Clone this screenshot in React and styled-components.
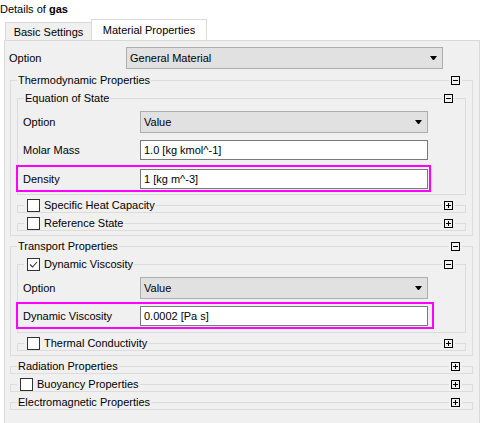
import React from "react";
import styled, { createGlobalStyle } from "styled-components";

const GlobalStyle = createGlobalStyle`
  html, body {
    margin: 0;
    padding: 0;
    background: #fff;
  }
  body {
    font-family: "Liberation Sans", Arial, sans-serif;
    font-size: 11px;
    color: #000;
  }
`;

const Page = styled.div`
  width: 485px;
  height: 423px;
  overflow: hidden;
  display: flex;
  flex-direction: column;
`;

const Heading = styled.div`
  flex: none;
  height: 19px;
  line-height: 18px;
  white-space: nowrap;
  b {
    font-weight: bold;
  }
`;

const TabBar = styled.div`
  flex: none;
  display: flex;
  align-items: flex-end;
  height: 21px;
  padding-left: 5px;
  position: relative;
  z-index: 1;
`;

const Tab = styled.div`
  box-sizing: border-box;
  width: ${({ $w }) => $w}px;
  height: ${({ $active }) => ($active ? 21 : 18)}px;
  margin-left: ${({ $active }) => ($active ? -1 : 0)}px;
  border: 1px solid #d9d9d9;
  border-bottom: none;
  background: ${({ $active }) => ($active ? "#fff" : "#f0f0f0")};
  display: flex;
  align-items: center;
  justify-content: center;
  white-space: nowrap;
`;

const Panel = styled.div`
  box-sizing: border-box;
  width: 476px;
  height: 400px;
  flex: none;
  margin-left: 4px;
  border: 1px solid #d9d9d9;
  background: #f0f0f0;
  padding: 6px 6px 0 5px;
  display: flex;
  flex-direction: column;
  gap: 11px;
`;

const Stack = styled.div`
  display: flex;
  flex-direction: column;
  gap: ${({ $gap }) => ($gap === undefined ? 10 : $gap)}px;
`;

const Group = styled.div`
  position: relative;
  border: 1px solid #dcdcdc;
  padding: ${({ $collapsed, $pad }) =>
    $collapsed ? "6px 0 0" : $pad || "17px 6px 4px 6px"};
`;

const Title = styled.div`
  position: absolute;
  top: -8px;
  left: 6px;
  height: 14px;
  line-height: 14px;
  padding: 0 1px;
  background: #f0f0f0;
  display: flex;
  align-items: center;
  white-space: nowrap;
`;

const ToggleWrap = styled.div`
  position: absolute;
  top: -5px;
  right: 10px;
  padding: 0 2px;
  height: 9px;
  background: #f0f0f0;
  display: flex;
`;

const Row = styled.div`
  display: flex;
  align-items: center;
  height: ${({ $h }) => $h || 28}px;
  margin-left: ${({ $ml }) => $ml || 0}px;
`;

const HighlightRow = styled.div`
  box-sizing: border-box;
  display: flex;
  align-items: center;
  align-self: flex-start;
  height: 27px;
  margin-top: ${({ $mt }) => $mt || 0}px;
  margin-left: -7px;
  border: 2px solid #ff00ff;
  padding: 0 ${({ $pr }) => $pr}px 0 5px;
`;

const Label = styled.div`
  width: 117px;
  flex: none;
  white-space: nowrap;
`;

const Select = styled.div`
  box-sizing: border-box;
  width: ${({ $w }) => $w}px;
  height: 22px;
  border: 1px solid #adadad;
  background: #e1e1e1;
  display: flex;
  align-items: center;
  justify-content: space-between;
  padding: 0 5px 0 3px;
`;

const Input = styled.div`
  box-sizing: border-box;
  width: 288px;
  height: 20px;
  border: 1px solid #7a7a7a;
  background: #fff;
  display: flex;
  align-items: center;
  padding-left: 3px;
  white-space: nowrap;
`;

const Box = styled.span`
  box-sizing: border-box;
  width: 13px;
  height: 13px;
  flex: none;
  margin: 0 4px 0 2px;
  border: 1px solid #333;
  background: #fff;
  display: flex;
  align-items: center;
  justify-content: center;
`;

const Arrow = () => (
  <svg width="7" height="4" viewBox="0 0 7 4">
    <polygon points="0,0 7,0 4,4 3,4" fill="#000" />
  </svg>
);

const Toggle = ({ open }) => (
  <ToggleWrap>
    <svg width="9" height="9" viewBox="0 0 9 9">
      <rect x="0.5" y="0.5" width="8" height="8" fill="none" stroke="#000" />
      <path d="M2 4.5h5" stroke="#000" />
      {!open && <path d="M4.5 2v5" stroke="#000" />}
    </svg>
  </ToggleWrap>
);

const Check = ({ checked }) => (
  <Box>
    {checked && (
      <svg width="11" height="11" viewBox="0 0 11 11">
        <path d="M2 5.5l2.5 2.5 4.5-5" fill="none" stroke="#333" strokeWidth="1.1" />
      </svg>
    )}
  </Box>
);

const GroupTitle = ({ checkbox, checked, children }) => (
  <Title>
    {checkbox && <Check checked={checked} />}
    {children}
  </Title>
);

const Collapsed = ({ title, checkbox }) => (
  <Group $collapsed>
    <GroupTitle checkbox={checkbox}>{title}</GroupTitle>
    <Toggle />
  </Group>
);

const ValueSelect = ({ width, children }) => (
  <Select $w={width}>
    <span>{children}</span>
    <Arrow />
  </Select>
);

export default function App() {
  return (
    <>
      <GlobalStyle />
      <Page>
        <Heading>
          Details of <b>gas</b>
        </Heading>
        <TabBar>
          <Tab $w={87}>Basic Settings</Tab>
          <Tab $w={116} $active>
            Material Properties
          </Tab>
        </TabBar>
        <Panel>
          <Row $h={22} $ml={-1}>
            <Label>Option</Label>
            <ValueSelect width={317}>General Material</ValueSelect>
          </Row>
          <Stack>
            <Group>
              <GroupTitle>Thermodynamic Properties</GroupTitle>
              <Toggle open />
              <Stack>
                <Group $pad="9px 6px 2px 5px">
                  <GroupTitle>Equation of State</GroupTitle>
                  <Toggle open />
                  <Stack $gap={0}>
                    <Row>
                      <Label>Option</Label>
                      <ValueSelect width={288}>Value</ValueSelect>
                    </Row>
                    <Row>
                      <Label>Molar Mass</Label>
                      <Input>1.0 [kg kmol^-1]</Input>
                    </Row>
                    <HighlightRow $mt={1} $pr={1}>
                      <Label>Density</Label>
                      <Input>1 [kg m^-3]</Input>
                    </HighlightRow>
                  </Stack>
                </Group>
                <Collapsed checkbox title="Specific Heat Capacity" />
                <Collapsed checkbox title="Reference State" />
              </Stack>
            </Group>
            <Group>
              <GroupTitle>Transport Properties</GroupTitle>
              <Toggle open />
              <Stack>
                <Group $pad="9px 6px 3px 5px">
                  <GroupTitle checkbox checked>
                    Dynamic Viscosity
                  </GroupTitle>
                  <Toggle open />
                  <Stack $gap={0}>
                    <Row>
                      <Label>Option</Label>
                      <ValueSelect width={288}>Value</ValueSelect>
                    </Row>
                    <HighlightRow $pr={4}>
                      <Label>Dynamic Viscosity</Label>
                      <Input>0.0002 [Pa s]</Input>
                    </HighlightRow>
                  </Stack>
                </Group>
                <Collapsed checkbox title="Thermal Conductivity" />
              </Stack>
            </Group>
            <Collapsed title="Radiation Properties" />
            <Collapsed checkbox title="Buoyancy Properties" />
            <Collapsed title="Electromagnetic Properties" />
          </Stack>
        </Panel>
      </Page>
    </>
  );
}
